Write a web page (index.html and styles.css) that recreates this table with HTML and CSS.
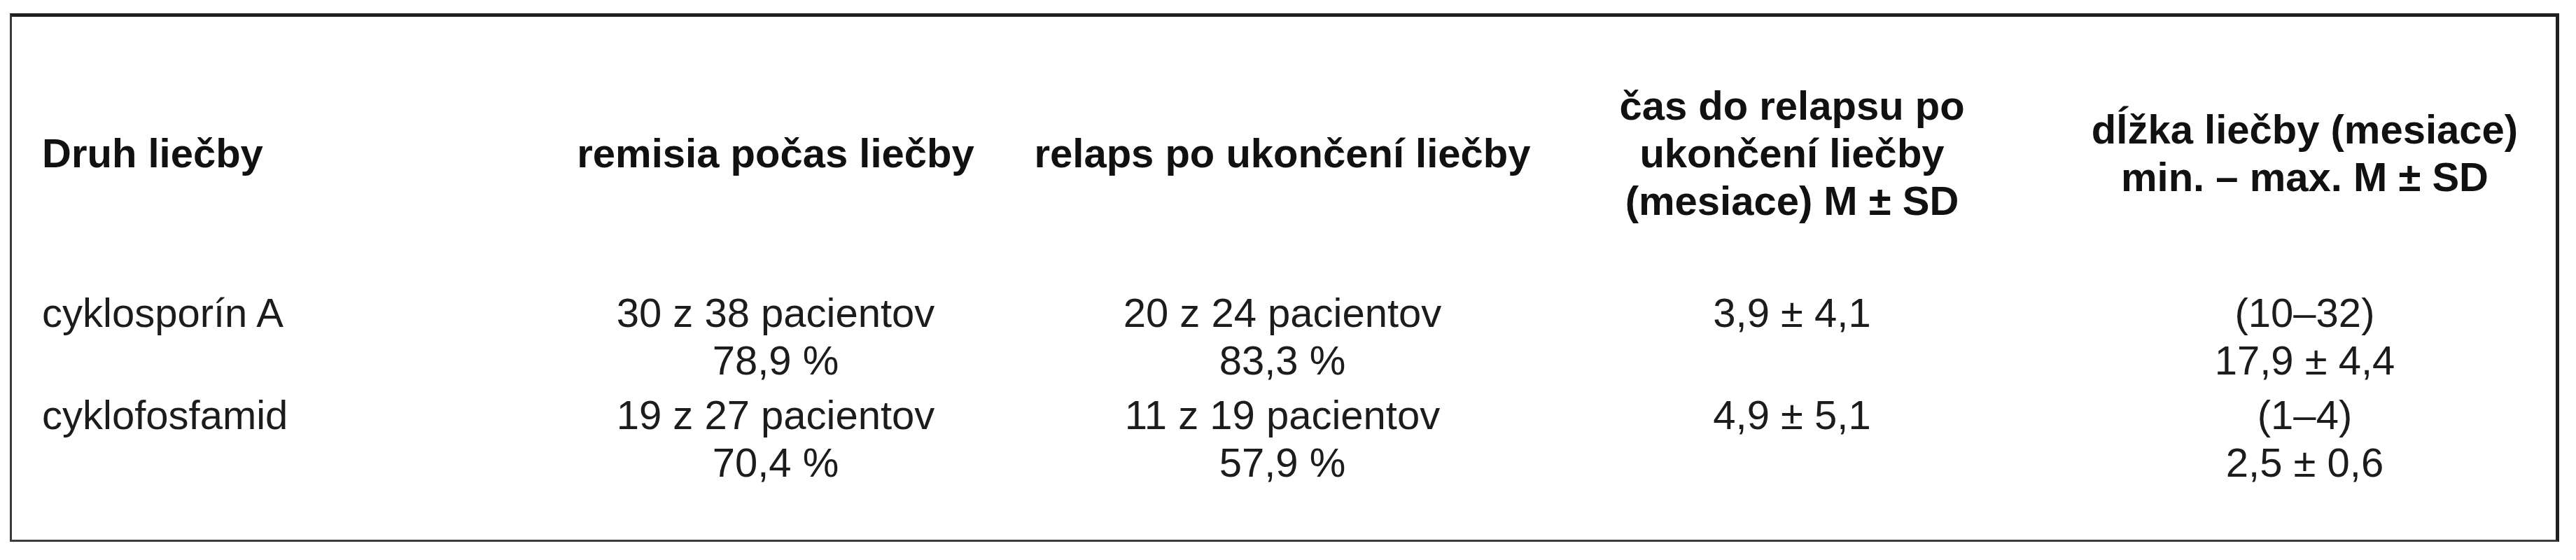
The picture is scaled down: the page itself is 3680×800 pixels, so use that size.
FILE: index.html
```html
<!DOCTYPE html>
<html lang="sk">
<head>
<meta charset="utf-8">
<title>Tabuľka liečby</title>
<link rel="stylesheet" href="styles.css">
</head>
<body>
<div class="box">
  <div class="row head">
    <div class="cell c1">Druh liečby</div>
    <div class="cell c2">remisia počas liečby</div>
    <div class="cell c3">relaps po ukončení liečby</div>
    <div class="cell c4">čas do relapsu po<br>ukončení liečby<br>(mesiace) M ± SD</div>
    <div class="cell c5">dĺžka liečby (mesiace)<br>min. – max. M ± SD</div>
  </div>
  <div class="row body first">
    <div class="cell c1">cyklosporín A</div>
    <div class="cell c2">30 z 38 pacientov<br>78,9 %</div>
    <div class="cell c3">20 z 24 pacientov<br>83,3 %</div>
    <div class="cell c4">3,9 ± 4,1</div>
    <div class="cell c5">(10–32)<br>17,9 ± 4,4</div>
  </div>
  <div class="row body second">
    <div class="cell c1">cyklofosfamid</div>
    <div class="cell c2">19 z 27 pacientov<br>70,4 %</div>
    <div class="cell c3">11 z 19 pacientov<br>57,9 %</div>
    <div class="cell c4">4,9 ± 5,1</div>
    <div class="cell c5">(1–4)<br>2,5 ± 0,6</div>
  </div>
</div>
</body>
</html>
```

FILE: styles.css
```css
html, body {
  margin: 0;
  padding: 0;
  background: #ffffff;
}

body {
  font-family: "Liberation Sans", Arial, Helvetica, sans-serif;
  font-size: 58px;
  line-height: 68px;
  color: #1c1c1c;
}

.box {
  box-sizing: border-box;
  margin: 19px 0 0 14px;
  width: 3642px;
  border-top: 5px solid #231f20;
  border-right: 5px solid #231f20;
  border-bottom: 3px solid #3c3c3c;
  border-left: 3px solid #3c3c3c;
  padding: 93px 0 76px 0;
}

.row {
  display: grid;
  grid-template-columns: 733px 716px 732px 724px 729px;
}

.head {
  align-items: center;
  font-weight: bold;
  color: #111111;
}

.body {
  align-items: start;
}

.body.first {
  padding-top: 92px;
}

.body.second {
  padding-top: 10px;
}

.cell {
  text-align: center;
  white-space: nowrap;
}

.c1 {
  text-align: left;
  padding-left: 43px;
}

.c5 {
  padding-left: 12px;
}
```
